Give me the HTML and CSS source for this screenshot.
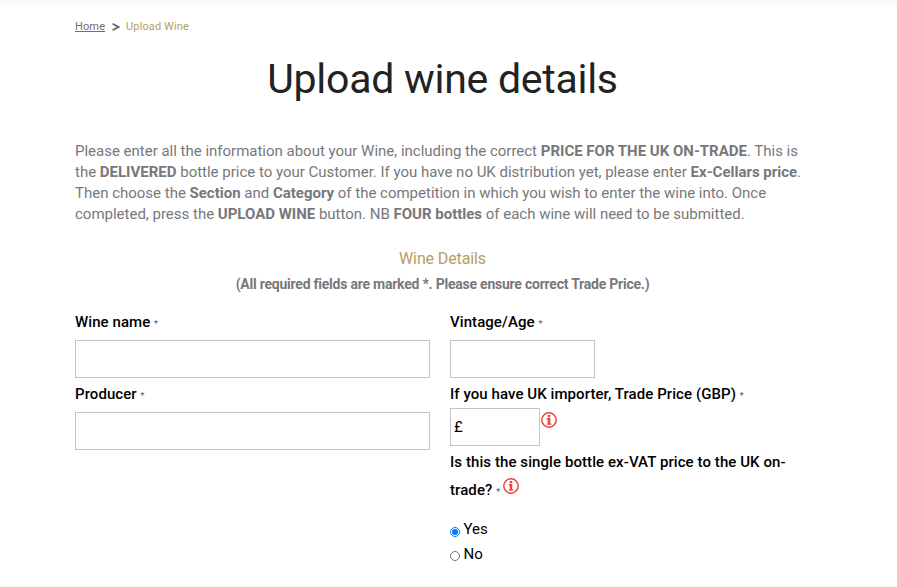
FILE: index.html
```html
<!DOCTYPE html>
<html lang="en">
<head>
<meta charset="utf-8">
<title>Upload Wine</title>
<link rel="stylesheet" href="styles.css">
</head>
<body>
<main class="page">
  <nav class="crumbs"><a href="#">Home</a><svg class="chevron" viewBox="0 0 8 8"><path d="M.6 .8 6.5 4 .6 7.2"/></svg><span>Upload Wine</span></nav>
  <h1>Upload wine details</h1>
  <p class="intro">Please enter all the information about your Wine, including the correct <b>PRICE FOR THE UK ON-TRADE</b>. This is<br>the <b>DELIVERED</b> bottle price to your Customer. If you have no UK distribution yet, please enter <b>Ex-Cellars price</b>.<br>Then choose the <b>Section</b> and <b>Category</b> of the competition in which you wish to enter the wine into. Once<br>completed, press the <b>UPLOAD WINE</b> button. NB <b>FOUR bottles</b> of each wine will need to be submitted.</p>
  <h2>Wine Details</h2>
  <p class="note">(All required fields are marked *. Please ensure correct Trade Price.)</p>
  <form class="columns">
    <div class="col">
      <label for="name">Wine name <i>*</i></label>
      <input class="box" id="name" type="text">
      <label for="producer">Producer <i>*</i></label>
      <input class="box" id="producer" type="text">
    </div>
    <div class="col">
      <label for="vintage">Vintage/Age <i>*</i></label>
      <input class="box vintage" id="vintage" type="text">
      <label class="price-label" for="price">If you have UK importer, Trade Price (GBP) <i>*</i></label>
      <div class="price-row">
        <input class="box price" id="price" type="text" value="£">
        <svg class="info" viewBox="0 0 16 16"><circle cx="8" cy="8" r="7.2"/><path d="M6.7 2.9h2.6v2.3H6.7zM5.8 6.1h3.5v5.4h1.1v1.3H5.7v-1.3h1.1V7.4h-1z"/></svg>
      </div>
      <div class="question">Is this the single bottle ex-VAT price to the UK on-<br>trade? <i>*</i> <svg class="info" viewBox="0 0 16 16"><circle cx="8" cy="8" r="7.2"/><path d="M6.7 2.9h2.6v2.3H6.7zM5.8 6.1h3.5v5.4h1.1v1.3H5.7v-1.3h1.1V7.4h-1z"/></svg></div>
      <label class="option"><input type="radio" name="vat" checked><span>Yes</span></label>
      <label class="option"><input type="radio" name="vat"><span>No</span></label>
    </div>
  </form>
</main>
</body>
</html>
```
FILE: styles.css
```css
* { box-sizing: border-box; }
body { margin: 0; background: linear-gradient(#f8f8f8, #fff 8px) no-repeat; font-family: Roboto, sans-serif; color: #000; height: 587px; overflow: hidden; }
.page { width: 735px; margin-left: 75px; padding-top: 20px; }
.crumbs { display: flex; align-items: center; height: 14px; font-size: 11px; line-height: 14px; letter-spacing: .12px; color: #b59e62; }
.crumbs a { color: #6d6e71; }
.chevron { width: 8px; height: 8px; margin: 0 6px 0 7px; fill: none; stroke: #666; stroke-width: 1.7; }
h1 { margin: 21px 0 0; height: 48px; font-size: 41px; line-height: 48px; letter-spacing: -.27px; font-weight: 400; text-align: center; color: #222; }
.intro { margin: 38px 0 0; font-size: 15px; line-height: 21px; letter-spacing: -.007px; color: #77787b; white-space: nowrap; }
h2 { margin: 24px 0 0; font-size: 16px; line-height: 20px; letter-spacing: -.12px; font-weight: 400; text-align: center; color: #b59e62; }
.note { margin: 5px 0 0; font-size: 14px; line-height: 20px; letter-spacing: -.23px; font-weight: 700; text-align: center; color: #77787b; }
.columns { display: grid; grid-template-columns: 355px 360px; gap: 20px; margin-top: 18px; }
.col label { display: block; height: 28px; font-size: 15px; line-height: 20px; letter-spacing: .07px; font-weight: 500; }
i { font-size: 9px; font-style: normal; font-weight: 400; color: #555; }
.box { display: block; width: 100%; height: 38px; margin: 0 0 6px; padding: 0 3px; border: 1px solid #c4c4c4; background: #fff; font: 15px Roboto, sans-serif; }
.vintage { width: 145px; }
.col .price-label { height: 24px; }
.price-row { display: flex; height: 38px; }
.price { width: 90px; }
.info { width: 16px; height: 16px; fill: #e8453c; }
.info circle { fill: none; stroke: #e8453c; stroke-width: 1.5; }
.price-row .info { margin: 4px 0 0 1px; }
.question { margin: 2px 0 0; font-size: 15px; line-height: 28px; letter-spacing: .08px; font-weight: 500; }
.question .info { margin: 0 0 1px -1px; }
.col .option { display: flex; align-items: center; height: 25px; line-height: 25px; letter-spacing: 0; font-weight: 400; }
.question + .option { margin-top: 11px; }
.option input { width: 10px; height: 10px; margin: 5px 4px 0 0; }
.option + .option input { margin-top: 3px; }
.option span { margin-left: -.5px; }
```
